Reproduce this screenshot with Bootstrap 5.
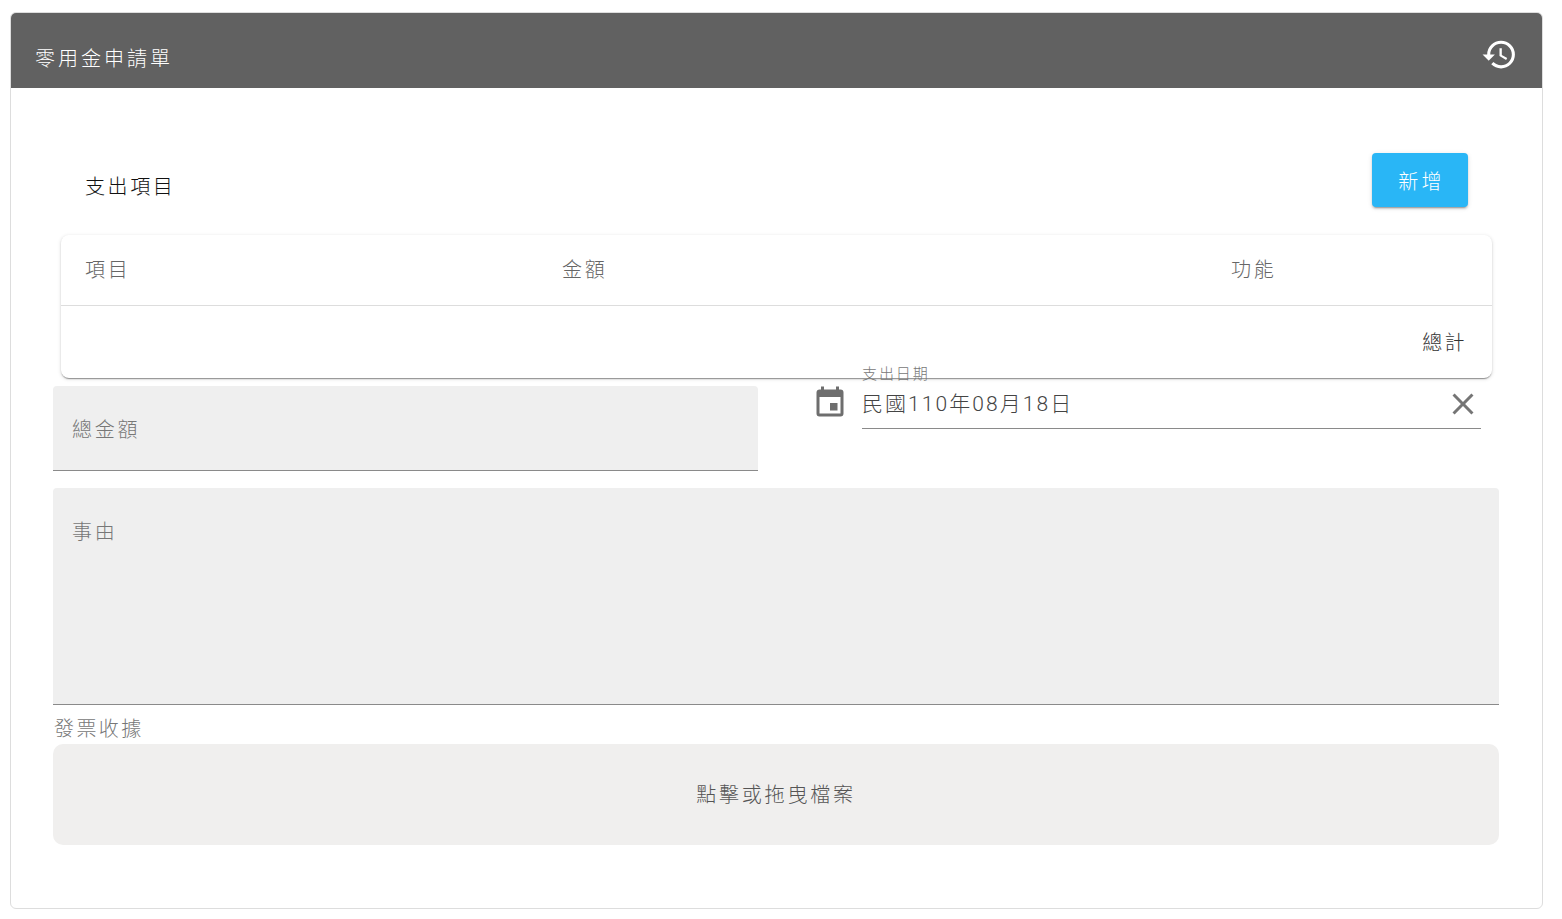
<!DOCTYPE html>
<html lang="zh-Hant">
<head>
<meta charset="utf-8">
<title>零用金申請單</title>
<link href="https://cdn.jsdelivr.net/npm/bootstrap@5.3.0/dist/css/bootstrap.min.css" rel="stylesheet">
<style>
html,body{height:100%;background:#fff;overflow:hidden}
body{font-family:Roboto,"Noto Sans CJK TC",sans-serif;font-weight:300;color:rgba(0,0,0,.87);letter-spacing:.09em}
.sheet{margin:12px 19px 0 10px;height:897px;border:1px solid #ddd;border-radius:6px;overflow:hidden}
.sheet-head{height:75px;background:#616161;color:#fff;padding:0 24px 0 24px;font-size:20px}
.sheet-title{line-height:1;margin-top:36px;letter-spacing:.15em;font-weight:300}
.hist{margin-top:23px}
.sheet-main{padding:65px 43px 0 42px}
.exp-head{padding:0 31px 0 32px;height:82px}
.exp-title{font-size:20px;color:#111;margin-top:22px;line-height:24px;font-weight:300;letter-spacing:.13em}
.add-btn{width:96px;height:54px;background:#29b6f6;border:0;color:#fff;font-size:20px;border-radius:4px;box-shadow:0 3px 1px -2px rgba(0,0,0,.2),0 2px 2px 0 rgba(0,0,0,.14),0 1px 5px 0 rgba(0,0,0,.12);letter-spacing:.16em;padding:3px 0 0 3px;font-weight:300}
.tbl-wrap{margin:0 7px 0 8px;border-radius:8px;height:143px;box-shadow:0 2px 1px -1px rgba(0,0,0,.3),0 1px 2px 0 rgba(0,0,0,.14),0 1px 4px 0 rgba(0,0,0,.12);overflow:hidden}
.tbl{table-layout:fixed;width:100%;margin:0}
.tbl th{height:70px;font-size:20px;font-weight:300;color:#666;border-bottom:1px solid #ddd;vertical-align:middle;padding:1px 0 0 24px;letter-spacing:.14em}
.tbl td{height:73px;border:0;padding:3px 25px 0 0;font-size:20px;text-align:right;vertical-align:middle;color:#333;letter-spacing:.12em}
.c1{width:477px}.c2{width:669px}
.form-zone{margin-top:8px}
.filled{background:#efefef;border-bottom:1px solid #8a8a8a;border-radius:4px 4px 0 0;color:#777;font-size:20px;padding-left:19px;letter-spacing:.14em}
.f-total{width:705px;height:85px;padding-top:30px;line-height:28px}
.date-col{margin-left:57px;width:667px;height:102px}
.cal{margin:-1px 14px 0 -3px;flex:none}
.date-line{width:619px;height:43px;border-bottom:1px solid #8a8a8a;font-size:21px;line-height:36px;color:#444;letter-spacing:.098em}
.date-label{position:absolute;left:47px;top:-22px;font-size:15px;color:#777;line-height:20px;letter-spacing:.125em}
.date-wrap{position:relative}
.f-reason{height:217px;padding-top:30px;line-height:28px}
.rcpt{color:#777;font-size:20px;line-height:24px;margin:12px 0 3px 1px;letter-spacing:.12em}
.drop{height:101px;background:#f0efee;border-radius:10px;color:#555;font-size:20px;letter-spacing:.14em}
</style>
</head>
<body>
<div class="sheet">
  <div class="sheet-head d-flex justify-content-between">
    <div class="sheet-title">零用金申請單</div>
    <svg class="hist" width="37" height="37" viewBox="0 0 24 24" fill="#fff"><path d="M13 3a9 9 0 0 0-9 9H1l3.89 3.89.07.14L9 12H6c0-3.87 3.13-7 7-7s7 3.13 7 7-3.13 7-7 7c-1.93 0-3.68-.79-4.94-2.06l-1.42 1.42A8.954 8.954 0 0 0 13 21a9 9 0 0 0 0-18zm-1 5v5l4.28 2.54.72-1.21-3.5-2.08V8H12z"/></svg>
  </div>
  <div class="sheet-main">
    <div class="exp-head d-flex justify-content-between">
      <div class="exp-title">支出項目</div>
      <button class="add-btn" type="button">新增</button>
    </div>
    <div class="tbl-wrap">
      <table class="table tbl">
        <thead><tr><th class="c1">項目</th><th class="c2">金額</th><th>功能</th></tr></thead>
        <tbody><tr><td colspan="3">總計</td></tr></tbody>
      </table>
    </div>
    <div class="form-zone">
      <div class="d-flex">
        <div class="filled f-total">總金額</div>
        <div class="date-col date-wrap d-flex">
          <svg class="cal" width="36" height="36" viewBox="0 0 24 24" fill="#6e6e6e"><path d="M19 19H5V8h14m-3-7v2H8V1H6v2H5c-1.11 0-2 .89-2 2v14a2 2 0 0 0 2 2h14a2 2 0 0 0 2-2V5a2 2 0 0 0-2-2h-1V1m-1 11h-5v5h5v-5z"/></svg>
          <div class="date-label">支出日期</div>
          <div class="date-line d-flex justify-content-between">
            <span>民國110年08月18日</span>
            <svg width="36" height="36" viewBox="0 0 24 24" fill="#757575"><path d="M19 6.41 17.59 5 12 10.59 6.41 5 5 6.41 10.59 12 5 17.59 6.41 19 12 13.41 17.59 19 19 17.59 13.41 12z"/></svg>
          </div>
        </div>
      </div>
      <div class="filled f-reason">事由</div>
      <div class="rcpt">發票收據</div>
      <div class="drop d-flex align-items-center justify-content-center">點擊或拖曳檔案</div>
    </div>
  </div>
</div>
<script src="https://cdn.jsdelivr.net/npm/bootstrap@5.3.0/dist/js/bootstrap.bundle.min.js"></script>
</body>
</html>
